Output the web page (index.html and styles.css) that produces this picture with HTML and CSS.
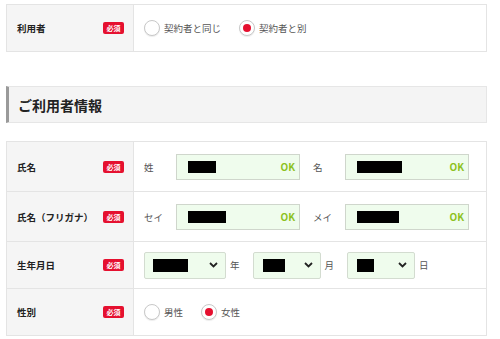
FILE: index.html
```html
<!DOCTYPE html>
<html lang="ja">
<head>
  <meta charset="UTF-8">
  <title>ご利用者情報</title>
  <link rel="stylesheet" href="styles.css">
</head>
<body>
  <div class="form-table">
    <div class="form-row row-short">
      <div class="form-label"><span>利用者</span><span class="req">必須</span></div>
      <div class="form-value">
        <label class="radio"><span class="dot"></span>契約者と同じ</label>
        <label class="radio checked"><span class="dot"></span>契約者と別</label>
      </div>
    </div>
  </div>

  <h3 class="section-title">ご利用者情報</h3>

  <div class="form-table">
    <div class="form-row">
      <div class="form-label"><span>氏名</span><span class="req">必須</span></div>
      <div class="form-value">
        <div class="field">
          <span class="field-name">姓</span>
          <div class="text-input"><span class="mask" style="width:28px"></span><span class="ok">OK</span></div>
        </div>
        <div class="field">
          <span class="field-name">名</span>
          <div class="text-input"><span class="mask" style="width:45px"></span><span class="ok">OK</span></div>
        </div>
      </div>
    </div>
    <div class="form-row">
      <div class="form-label"><span>氏名（フリガナ）</span><span class="req">必須</span></div>
      <div class="form-value">
        <div class="field">
          <span class="field-name">セイ</span>
          <div class="text-input"><span class="mask" style="width:38px"></span><span class="ok">OK</span></div>
        </div>
        <div class="field">
          <span class="field-name">メイ</span>
          <div class="text-input"><span class="mask" style="width:42px"></span><span class="ok">OK</span></div>
        </div>
      </div>
    </div>
    <div class="form-row row-short">
      <div class="form-label"><span>生年月日</span><span class="req">必須</span></div>
      <div class="form-value">
        <div class="select year"><span class="mask" style="width:35px"></span>
          <svg class="chev" width="9" height="6" viewBox="0 0 9 6"><path d="M1 1l3.5 3.5L8 1" fill="none" stroke="#222" stroke-width="1.8"/></svg>
        </div>
        <span class="unit">年</span>
        <div class="select"><span class="mask" style="width:22px"></span>
          <svg class="chev" width="9" height="6" viewBox="0 0 9 6"><path d="M1 1l3.5 3.5L8 1" fill="none" stroke="#222" stroke-width="1.8"/></svg>
        </div>
        <span class="unit">月</span>
        <div class="select"><span class="mask" style="width:17px"></span>
          <svg class="chev" width="9" height="6" viewBox="0 0 9 6"><path d="M1 1l3.5 3.5L8 1" fill="none" stroke="#222" stroke-width="1.8"/></svg>
        </div>
        <span class="unit">日</span>
      </div>
    </div>
    <div class="form-row row-short">
      <div class="form-label"><span>性別</span><span class="req">必須</span></div>
      <div class="form-value">
        <label class="radio"><span class="dot"></span>男性</label>
        <label class="radio checked"><span class="dot"></span>女性</label>
      </div>
    </div>
  </div>
</body>
</html>
```

FILE: styles.css
```css
body {
  margin: 0;
  padding: 4px 0 0 6px;
  font-family: "Noto Sans CJK JP", "Noto Sans", sans-serif;
  color: #333;
  background: #fff;
}

.form-table {
  width: 481px;
  box-sizing: border-box;
  border: 1px solid #e4e4e4;
  border-bottom: none;
}

.form-row {
  display: grid;
  grid-template-columns: 127px 1fr;
  height: 50px;
  box-sizing: border-box;
  border-bottom: 1px solid #e4e4e4;
}

.form-row.row-short {
  height: 47px;
}

.form-label {
  display: flex;
  align-items: center;
  justify-content: space-between;
  padding: 0 9px 0 10px;
  background: #f5f5f5;
  border-right: 1px solid #e4e4e4;
  font-size: 9.5px;
  font-weight: bold;
  color: #222;
}

.req {
  display: inline-block;
  width: 21px;
  height: 12px;
  line-height: 12px;
  text-align: center;
  background: #e5102f;
  color: #fff;
  font-size: 7px;
  border-radius: 2px;
}

.form-value {
  display: flex;
  align-items: center;
  padding-left: 10px;
  font-size: 9.5px;
  color: #555;
}

.radio {
  display: flex;
  align-items: center;
  margin-right: 18px;
}

.radio .dot {
  width: 16px;
  height: 16px;
  box-sizing: border-box;
  border: 1px solid #c8c8c8;
  border-radius: 50%;
  background: #fff;
  margin-right: 4px;
  display: flex;
  align-items: center;
  justify-content: center;
  box-shadow: 0 1px 1px rgba(0,0,0,0.08);
}

.radio.checked .dot::after {
  content: "";
  width: 8px;
  height: 8px;
  border-radius: 50%;
  background: #e5102f;
}

.field {
  display: flex;
  align-items: center;
  margin-right: 13px;
}

.field-name {
  width: 32px;
}

.text-input {
  width: 124px;
  height: 26px;
  box-sizing: border-box;
  border: 1px solid #cfd6cc;
  background: #effced;
  display: flex;
  align-items: center;
  justify-content: space-between;
  padding: 0 4px 0 11px;
}

.mask {
  display: inline-block;
  height: 12px;
  background: #000;
}

.ok {
  color: #8dc21f;
  font-weight: bold;
  font-size: 10px;
}

.select {
  width: 68px;
  height: 27px;
  box-sizing: border-box;
  border: 1px solid #d3dcd0;
  border-radius: 2px;
  background: #effced;
  display: flex;
  align-items: center;
  justify-content: space-between;
  padding: 0 7px 0 9px;
}

.select.year {
  width: 82px;
  padding-left: 8px;
}

.select .mask {
  height: 13px;
}

.unit {
  margin: 0 13px 0 4px;
}

.section-title {
  width: 481px;
  height: 37px;
  box-sizing: border-box;
  margin: 34px 0 18px;
  padding-left: 9px;
  display: flex;
  align-items: center;
  background: #f4f4f4;
  border: 1px solid #e6e6e6;
  border-left: 3px solid #9a9a9a;
  font-size: 14px;
  font-weight: bold;
  color: #222;
}
```
